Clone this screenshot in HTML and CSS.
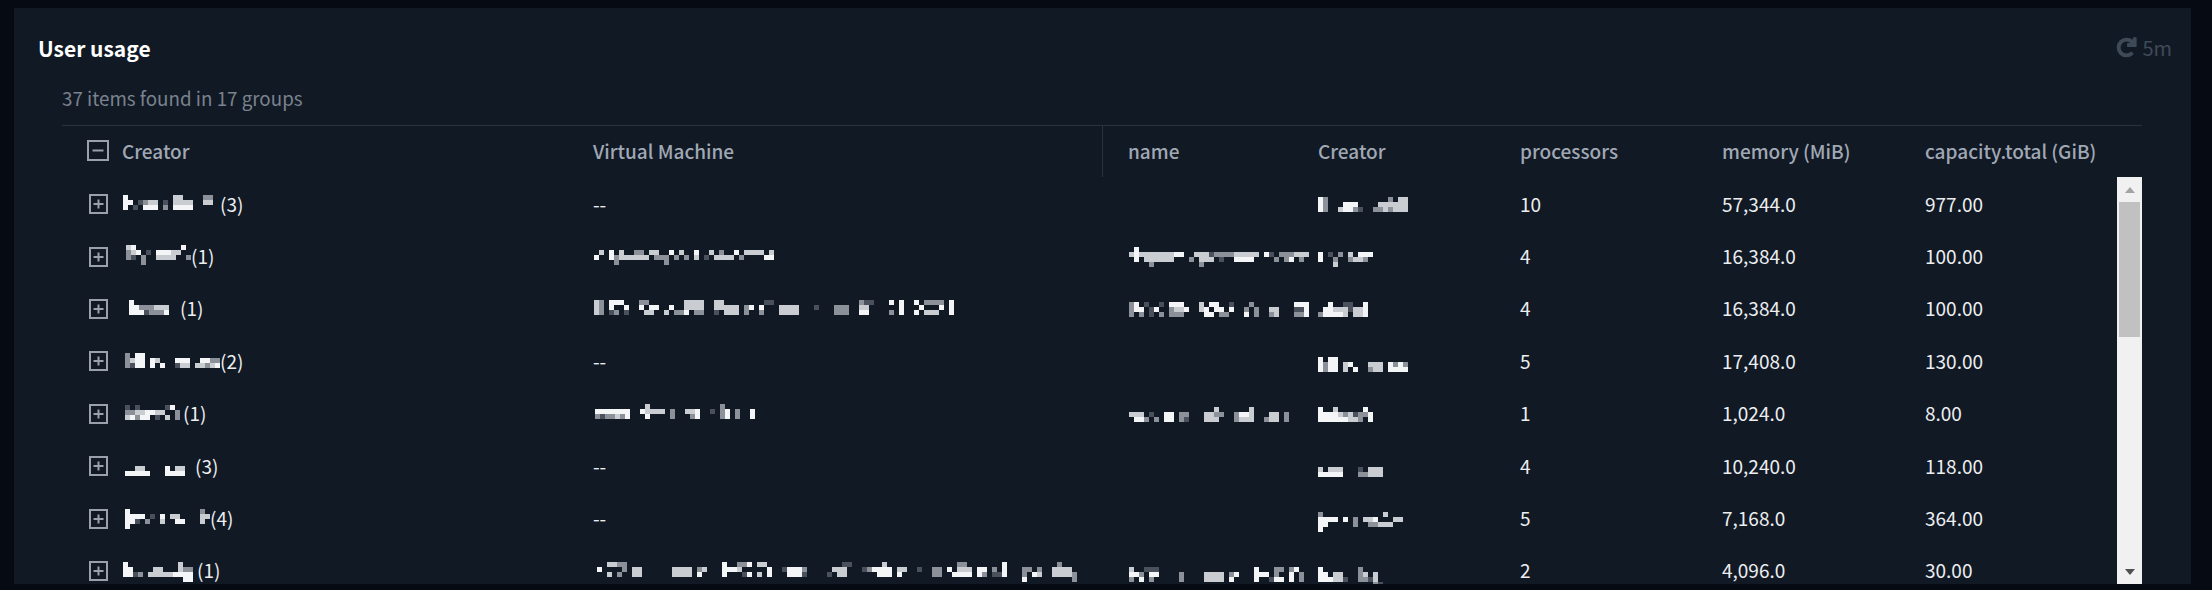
FILE: index.html
```html
<!DOCTYPE html>
<html lang="en">
<head>
<meta charset="utf-8">
<title>User usage</title>
<link rel="stylesheet" href="styles.css">
</head>
<body>
<svg class="defs" width="0" height="0" aria-hidden="true">
  <symbol id="plus" viewBox="0 0 19 20"><rect x="1" y="1" width="17" height="18"/><path d="M4.5 10h10M9.5 5.5v9"/></symbol>
  <symbol id="minus" viewBox="0 0 22 21"><rect x="1" y="1" width="20" height="19"/><path d="M5.5 10.5h11"/></symbol>
</svg>
<div class="page">
  <section class="panel">
    <header class="panel-head">
      <h2 class="title">User usage</h2>
      <div class="refresh">
        <svg class="refresh-icon" viewBox="0 0 512 512" width="19" height="19"><path d="M500.33 0h-47.41a12 12 0 0 0-12 12.57l4 82.76A247.42 247.42 0 0 0 256 8C119.34 8 8.9 119.53 8 256.19 7.1 393.07 118.08 504 256 504a247.1 247.1 0 0 0 166.18-63.91 12 12 0 0 0 .48-17.43l-34-34a12 12 0 0 0-16.38-.55A176 176 0 1 1 402.1 157.8l-101.53-4.87a12 12 0 0 0-12.57 12v47.41a12 12 0 0 0 12 12h200.33a12 12 0 0 0 12-12V12a12 12 0 0 0-12-12z"/></svg>
        <span>5m</span>
      </div>
    </header>
    <p class="summary">37 items found in 17 groups</p>
    <div class="table">
      <div class="row head">
        <div class="first"><span class="toggle"><svg class="box big" width="22" height="21"><use href="#minus"/></svg></span>Creator</div>
        <div>Virtual Machine</div>
        <div class="name-cell divided">name</div>
        <div>Creator</div>
        <div>processors</div>
        <div>memory (MiB)</div>
        <div>capacity.total (GiB)</div>
      </div>
      <div class="body">
        <div class="rows">

          <div class="row">
            <div class="first"><span class="toggle"><svg class="box" width="19" height="20"><use href="#plus"/></svg></span>
              <svg class="mosaic" width="98" height="28" viewBox="-.2 -1.2 19.6 5.6"><path class="w" d="M0 .5h1M0 1.5h2M0 2.5h1M4 2.5h3M10 2.5h4"/><path class="l" d="M10 .5h2M5 1.5h2M10 1.5h4M16 1.5h2"/><path class="m" d="M16 .5h2M4 1.5h1M8 2.5h1"/><path class="d" d="M3 1.5h1M8 1.5h1M2 2.5h1"/></svg><span>(3)</span></div>
            <div class="dash">--</div>
            <div class="name-cell"></div>
            <div><svg class="mosaic" width="95" height="28" viewBox="0 -1.6 19 5.6"><path class="w" d="M0 .5h1M0 1.5h1M0 2.5h1M5 1.5h3M5 2.5h2"/><path class="l" d="M16 .5h2M12 1.5h6M4 2.5h1M13 2.5h1M15 2.5h3"/><path class="m" d="M1 .5h1M1 1.5h1M1 2.5h1M14 .5h1M7 2.5h1M11 2.5h2M14 2.5h1"/><path class="d" d="M8 2.5h1"/></svg></div>
            <div>10</div><div>57,344.0</div><div>977.00</div>
          </div>

          <div class="row">
            <div class="first"><span class="toggle"><svg class="box" width="19" height="20"><use href="#plus"/></svg></span>
              <svg class="mosaic" width="69" height="28" viewBox="-.8 -.6 13.8 5.6"><path class="w" d="M1 .5h1M11 .5h1M2 1.5h1M6 1.5h3"/><path class="l" d="M0 .5h1M1 1.5h1M9 1.5h2M6 2.5h4"/><path class="m" d="M0 1.5h1M0 2.5h1M3 2.5h1M12 2.5h1M3 3.5h1"/><path class="d" d="M1 2.5h1M4 1.5h1"/></svg><span>(1)</span></div>
            <div><svg class="mosaic" width="185" height="28" viewBox="-.2 -1.6 37 5.6"><path class="w" d="M3 .5h1M15 .5h1M20 .5h1M28 .5h1M0 1.5h1M3 1.5h1M34 1.5h2"/><path class="l" d="M1 .5h1M5 .5h1M11 .5h2M17 .5h1M23 .5h1M30 .5h4M35 .5h1M5 1.5h6M20 1.5h1M24 1.5h4"/><path class="m" d="M8 .5h2M25 .5h1M4 1.5h1M12 1.5h3M16 1.5h1M18 1.5h1M29 1.5h1M4 2.5h1M14 2.5h1"/><path class="d" d="M22 1.5h1"/></svg></div>
            <div class="name-cell"><svg class="mosaic" width="185" height="28" viewBox="-.2 -1 37 5.6"><path class="w" d="M1 .5h1M1 1.5h1M9 1.5h2M27 1.5h1M1 2.5h1M21 2.5h4M32 2.5h1"/><path class="l" d="M0 1.5h1M2 1.5h1M3 1.5h6M13 1.5h3M21 1.5h5M33 1.5h3M3 2.5h6M14 2.5h3"/><path class="m" d="M17 1.5h4M30 1.5h3M12 2.5h1M29 2.5h1M31 2.5h1M34 2.5h1M4 3.5h1M14 3.5h1"/><path class="d" d="M16 1.5h1M28 1.5h1M18 2.5h1"/></svg></div>
            <div><svg class="mosaic" width="95" height="28" viewBox="0 -1 19 5.6"><path class="w" d="M0 1.5h1M0 2.5h1M8 1.5h3"/><path class="l" d="M6 1.5h1M7 2.5h2M3 3.5h1"/><path class="m" d="M4 1.5h1M3 2.5h1M6 2.5h1M9 2.5h1"/><path class="d" d="M2 1.5h1"/></svg></div>
            <div>4</div><div>16,384.0</div><div>100.00</div>
          </div>

          <div class="row">
            <div class="first"><span class="toggle"><svg class="box" width="19" height="20"><use href="#plus"/></svg></span>
              <svg class="mosaic" width="58" height="28" viewBox="-1.4 -1.2 11.6 5.6"><path class="w" d="M0 .5h1M0 1.5h2M0 2.5h3M7 2.5h1"/><path class="l" d="M5 1.5h3"/><path class="m" d="M2 1.5h3M4 2.5h3"/><path class="d" d="M3 2.5h1"/></svg><span>(1)</span></div>
            <div><svg class="mosaic" width="365" height="28" viewBox="-.2 -1.2 73 5.6"><path class="w" d="M3 .5h3M59 .5h1M61 .5h1M64 .5h1M71 .5h1M3 1.5h1M6 1.5h1M9 1.5h1M11 1.5h2M15 1.5h1M31 1.5h1M33 1.5h1M61 1.5h1M65 1.5h1M69 1.5h1M71 1.5h1M18 2.5h1M53 2.5h2M61 2.5h1M64 2.5h1M71 2.5h1"/><path class="l" d="M0 .5h1M18 .5h4M24 .5h2M0 1.5h1M18 1.5h4M24 1.5h5M37 1.5h4M53 1.5h2M0 2.5h1M10 2.5h2M14 2.5h1M26 2.5h3M37 2.5h4M66 2.5h3"/><path class="m" d="M1 .5h1M9 .5h2M53 .5h1M66 .5h4M1 1.5h1M30 1.5h1M48 1.5h3M1 2.5h1M4 2.5h1M16 2.5h2M20 2.5h2M30 2.5h1M33 2.5h1M48 2.5h3M59 2.5h1"/><path class="d" d="M34 .5h2M54 .5h2M44 1.5h1M3 2.5h1M6 2.5h1M24 2.5h1"/></svg></div>
            <div class="name-cell"><svg class="mosaic" width="185" height="28" viewBox="-.2 -1.6 37 5.6"><path class="w" d="M1 .5h1M8 .5h3M16 .5h2M33 .5h3M1 1.5h2M5 1.5h1M11 1.5h1M15 1.5h1M17 1.5h2M20 1.5h1M35 1.5h1M15 2.5h2M23 2.5h1M35 2.5h1"/><path class="l" d="M14 .5h1M9 1.5h2M14 1.5h1M28 1.5h2M29 2.5h1"/><path class="m" d="M0 .5h1M24 .5h1M0 1.5h1M8 1.5h1M23 1.5h1M25 1.5h1M0 2.5h1M2 2.5h1M6 2.5h1M8 2.5h3M18 2.5h2M25 2.5h1M28 2.5h1M33 2.5h2"/><path class="d" d="M3 .5h1M6 .5h1M20 .5h1M4 1.5h1M33 1.5h2M4 2.5h1"/></svg></div>
            <div><svg class="mosaic" width="95" height="28" viewBox="0 -1.6 19 5.6"><path class="w" d="M2 .5h1M9 .5h1M1 1.5h2M9 1.5h1M1 2.5h4M9 2.5h1"/><path class="l" d="M3 1.5h3M7 1.5h2M5 2.5h1M7 2.5h2"/><path class="m" d="M0 2.5h1"/><path class="d" d="M5 .5h2M6 1.5h1"/></svg></div>
            <div>4</div><div>16,384.0</div><div>100.00</div>
          </div>

          <div class="row">
            <div class="first"><span class="toggle"><svg class="box" width="19" height="20"><use href="#plus"/></svg></span>
              <svg class="mosaic" width="98" height="28" viewBox="-.6 -1.4 19.6 5.6"><path class="w" d="M2 .5h2M2 1.5h2M5 1.5h1M10 1.5h3M15 1.5h2M2 2.5h2M5 2.5h1M7 2.5h1M18 2.5h1"/><path class="l" d="M1 1.5h1M6 1.5h1M11 2.5h2M14 2.5h2M17 2.5h1"/><path class="m" d="M0 .5h1M0 1.5h1M0 2.5h1M17 1.5h2M16 2.5h1"/><path class="d" d="M1 2.5h1M10 2.5h1"/></svg><span>(2)</span></div>
            <div class="dash">--</div>
            <div class="name-cell"></div>
            <div><svg class="mosaic" width="95" height="28" viewBox="0 -2.2 19 5.6"><path class="w" d="M0 .5h1M2 .5h2M0 1.5h1M2 1.5h2M6 1.5h1M14 1.5h1M16 1.5h1M0 2.5h1M2 2.5h2M7 2.5h1M14 2.5h4"/><path class="l" d="M5 1.5h1M10 1.5h3M5 2.5h1M11 2.5h2"/><path class="m" d="M1 1.5h1M15 1.5h1M17 1.5h1M1 2.5h1M10 2.5h1"/></svg></div>
            <div>5</div><div>17,408.0</div><div>130.00</div>
          </div>

          <div class="row">
            <div class="first"><span class="toggle"><svg class="box" width="19" height="20"><use href="#plus"/></svg></span>
              <svg class="mosaic" width="61" height="28" viewBox="-.6 -1.2 12.2 5.6"><path class="w" d="M9 .5h1M4 1.5h2M1 2.5h1M3 2.5h2"/><path class="l" d="M6 1.5h2M2 1.5h2M0 2.5h1M8 2.5h1"/><path class="m" d="M0 1.5h2M10 1.5h1M2 2.5h1M10 2.5h1"/><path class="d" d="M0 .5h1M2 .5h1M8 .5h1M6 2.5h1"/></svg><span>(1)</span></div>
            <div><svg class="mosaic" width="165" height="28" viewBox="-.4 -1 33 5.6"><path class="w" d="M0 1.5h7M9 1.5h1M20 1.5h1M26 1.5h1M31 1.5h1M6 2.5h1M10 2.5h1M20 2.5h1M26 2.5h1M31 2.5h1"/><path class="l" d="M10 .5h1M10 1.5h4M18 1.5h2M4 2.5h1"/><path class="m" d="M25 .5h1M15 1.5h1M25 1.5h1M28 1.5h1M0 2.5h1M2 2.5h2M5 2.5h1M15 2.5h1M19 2.5h1M25 2.5h1M28 2.5h1"/><path class="d" d="M23 1.5h1M1 2.5h1"/></svg></div>
            <div class="name-cell"><svg class="mosaic" width="185" height="28" viewBox="-.2 -1.6 37 5.6"><path class="w" d="M22 1.5h2M7 1.5h2M1 2.5h2M7 2.5h2"/><path class="l" d="M17 .5h1M24 .5h1M0 1.5h3M15 1.5h2M24 1.5h1M28 1.5h2M15 2.5h3M22 2.5h3M28 2.5h2"/><path class="m" d="M10 1.5h2M17 1.5h2M21 1.5h1M31 1.5h1M3 2.5h1M5 2.5h1M10 2.5h1M21 2.5h1M27 2.5h1M31 2.5h1"/><path class="d" d="M4 1.5h1M11 2.5h1"/></svg></div>
            <div><svg class="mosaic" width="95" height="28" viewBox="0 -1.6 19 5.6"><path class="w" d="M0 .5h1M9 .5h1M0 1.5h4M10 1.5h1M0 2.5h6M10 2.5h1"/><path class="l" d="M3 .5h1M4 1.5h1M6 1.5h1M6 2.5h2"/><path class="m" d="M5 1.5h1M8 1.5h2M8 2.5h1"/><path class="d" d="M7 1.5h1"/></svg></div>
            <div>1</div><div>1,024.0</div><div>8.00</div>
          </div>

          <div class="row">
            <div class="first"><span class="toggle"><svg class="box" width="19" height="20"><use href="#plus"/></svg></span>
              <svg class="mosaic" width="73" height="28" viewBox="-.6 -3 14.6 5.6"><path class="w" d="M8 .5h1M0 1.5h5M8 1.5h4"/><path class="l" d="M2 .5h2M10 .5h2"/></svg><span>(3)</span></div>
            <div class="dash">--</div>
            <div class="name-cell"></div>
            <div><svg class="mosaic" width="95" height="28" viewBox="0 -3.2 19 5.6"><path class="w" d="M0 1.5h5"/><path class="l" d="M0 .5h1M2 .5h3M10 .5h3M10 1.5h3"/><path class="m" d="M8 1.5h2"/><path class="d" d="M8 .5h1"/></svg></div>
            <div>4</div><div>10,240.0</div><div>118.00</div>
          </div>

          <div class="row">
            <div class="first"><span class="toggle"><svg class="box" width="19" height="20"><use href="#plus"/></svg></span>
              <svg class="mosaic" width="88" height="28" viewBox="-.6 -1 17.6 5.6"><path class="w" d="M0 .5h1M0 1.5h4M7 1.5h1M0 2.5h2M10 2.5h2M0 3.5h1"/><path class="l" d="M9 1.5h2M15 1.5h2M7 2.5h1M15 2.5h1"/><path class="m" d="M15 .5h1M4 2.5h1"/><path class="d" d="M5 1.5h1M2 2.5h1"/></svg><span>(4)</span></div>
            <div class="dash">--</div>
            <div class="name-cell"></div>
            <div><svg class="mosaic" width="95" height="28" viewBox="0 -1.6 19 5.6"><path class="w" d="M0 1.5h4M5 1.5h1M11 1.5h1M0 2.5h2M0 3.5h1"/><path class="l" d="M9 1.5h2M15 1.5h2M13 .5h1M12 2.5h3"/><path class="m" d="M0 .5h1M7 1.5h1M7 2.5h1M10 2.5h2"/></svg></div>
            <div>5</div><div>7,168.0</div><div>364.00</div>
          </div>

          <div class="row">
            <div class="first"><span class="toggle"><svg class="box" width="19" height="20"><use href="#plus"/></svg></span>
              <svg class="mosaic" width="75" height="28" viewBox="-.2 -1.2 15 5.6"><path class="w" d="M0 .5h1M0 1.5h2M0 2.5h2M10 2.5h4M12 3.5h2"/><path class="l" d="M11 .5h1M6 1.5h2M11 1.5h1M5 2.5h5"/><path class="m" d="M12 1.5h2M3 2.5h1"/><path class="d" d="M2 2.5h1"/></svg><span>(1)</span></div>
            <div><svg class="mosaic" width="485" height="28" viewBox="-.8 -1.2 97 5.6"><path class="w" d="M25 .5h1M30 .5h1M81 .5h1M0 1.5h1M25 1.5h3M34 1.5h1M38 1.5h3M55 1.5h4M70 1.5h1M76 1.5h2M81 1.5h1M20 2.5h1M25 2.5h1M30 2.5h1M34 2.5h1M38 2.5h3M56 2.5h3M60 2.5h1M71 2.5h4M76 2.5h1M81 2.5h1M87 2.5h1M85 3.5h1"/><path class="l" d="M2 .5h2M32 .5h2M57 .5h1M7 1.5h2M15 1.5h4M21 1.5h1M28 1.5h1M47 1.5h3M60 1.5h2M72 1.5h3M91 1.5h4M2 2.5h1M7 2.5h2M15 2.5h4M32 2.5h1M48 2.5h2M88 2.5h1M91 2.5h4"/><path class="m" d="M4 .5h2M28 .5h2M72 .5h2M92 .5h1M5 1.5h1M20 1.5h1M41 1.5h1M54 1.5h1M67 1.5h2M79 1.5h1M85 1.5h2M88 1.5h1M4 2.5h1M67 2.5h2M77 2.5h1M85 2.5h1M95 2.5h1M95 3.5h1"/><path class="d" d="M49 .5h2M37 1.5h1M53 1.5h1M64 1.5h1M29 2.5h1M41 2.5h1M46 2.5h1M79 2.5h2"/></svg></div>
            <div class="name-cell"><svg class="mosaic" width="185" height="28" viewBox="-.2 -2.2 37 5.6"><path class="w" d="M25 .5h1M33 .5h1M0 1.5h2M4 1.5h2M21 1.5h1M25 1.5h3M32 1.5h1M2 2.5h1M20 2.5h1M25 2.5h1M29 2.5h2M32 2.5h1"/><path class="l" d="M0 .5h1M15 1.5h4M15 2.5h4"/><path class="m" d="M29 .5h2M32 .5h1M2 1.5h1M10 1.5h1M20 1.5h1M29 1.5h1M34 1.5h1M0 2.5h1M4 2.5h1M10 2.5h1M34 2.5h1"/><path class="d" d="M3 .5h3M28 2.5h1"/></svg></div>
            <div><svg class="mosaic" width="95" height="28" viewBox="0 -2.2 19 5.6"><path class="w" d="M0 .5h1M0 1.5h2M0 2.5h3"/><path class="l" d="M3 1.5h2M9 1.5h1M11 1.5h1M3 2.5h2M11 2.5h1"/><path class="m" d="M8 .5h1M8 1.5h1M8 2.5h2M11 3.5h1"/><path class="d" d="M5 2.5h1M10 2.5h1M12 3.5h1"/></svg></div>
            <div>2</div><div>4,096.0</div><div>30.00</div>
          </div>

        </div>
        <div class="scrollbar">
          <div class="arrow"><span class="tri up"></span></div>
          <div class="track"><div class="thumb"></div></div>
          <div class="arrow"><span class="tri down"></span></div>
        </div>
      </div>
    </div>
  </section>
</div>
</body>
</html>
```

FILE: styles.css
```css
* { box-sizing: border-box; }
html, body { margin: 0; height: 100%; background: #fff; overflow: hidden; }
body { font-family: "Noto Sans CJK SC", "Noto Sans", sans-serif; }
.defs { position: absolute; }

.page {
  height: 590px;
  padding: 8px 21px 6px 14px;
  background: #060a12;
}
.panel { height: 576px; background: #111925; overflow: hidden; }

.panel-head {
  height: 82px;
  padding: 0 19px 3px 24px;
  display: flex;
  align-items: center;
  justify-content: space-between;
}
.title { margin: 0; font-size: 21px; font-weight: 700; color: #fff; }
.refresh { display: flex; align-items: center; gap: 6px; color: #3f4a58; font-size: 20px; }
.refresh-icon { fill: #3f4a58; stroke: #3f4a58; stroke-width: 34; overflow: visible; }

.summary {
  margin: -2px 0 0;
  height: 37px;
  padding-left: 48px;
  font-size: 18.8px;
  line-height: 20px;
  color: #7a828e;
}

.table { margin: 0 49px 0 48px; border-top: 1px solid #2a323e; }

.row {
  display: grid;
  grid-template-columns: 531px 509px 216px 202px 202px 203px 1fr;
  align-items: center;
  height: 52.4px;
  font-size: 19px;
  color: #eceef0;
}
.row.head { height: 51px; font-weight: 500; color: #a0a8b4; align-items: stretch; }
.row.head > div { display: flex; align-items: center; padding-bottom: 2px; }

.first { display: flex; align-items: center; }
.toggle { width: 40px; margin: 0 4px 0 16px; display: flex; justify-content: center; flex: none; padding-top: 2px; }
.head .toggle { padding-top: 0; }
.box { fill: none; stroke: #9aa1ab; stroke-width: 2; display: block; }
.name-cell { padding-left: 26px; }
.row.head > .divided { border-left: 1px solid #2a323e; padding-left: 25px; }
.dash { line-height: 1; }

.mosaic { display: block; flex: none; fill: none; stroke-width: 1; shape-rendering: crispEdges; }
.mosaic .w { stroke: #f4f5f6; }
.mosaic .l { stroke: #c9ccd1; }
.mosaic .m { stroke: #8c9199; }
.mosaic .d { stroke: #4b515c; }

.body { display: flex; height: 407px; overflow: hidden; }
.rows { flex: 1; min-width: 0; overflow: hidden; }

.scrollbar { width: 25px; flex: none; background: #f1f1f1; display: flex; flex-direction: column; }
.arrow { height: 25px; flex: none; display: flex; align-items: center; justify-content: center; }
.track { flex: 1; padding: 0 2px; }
.thumb { height: 135px; background: #c1c1c1; }
.tri { width: 0; height: 0; border-left: 5.5px solid transparent; border-right: 5.5px solid transparent; }
.tri.up { border-bottom: 6px solid #a3a3a3; }
.tri.down { border-top: 6px solid #505050; }
```
